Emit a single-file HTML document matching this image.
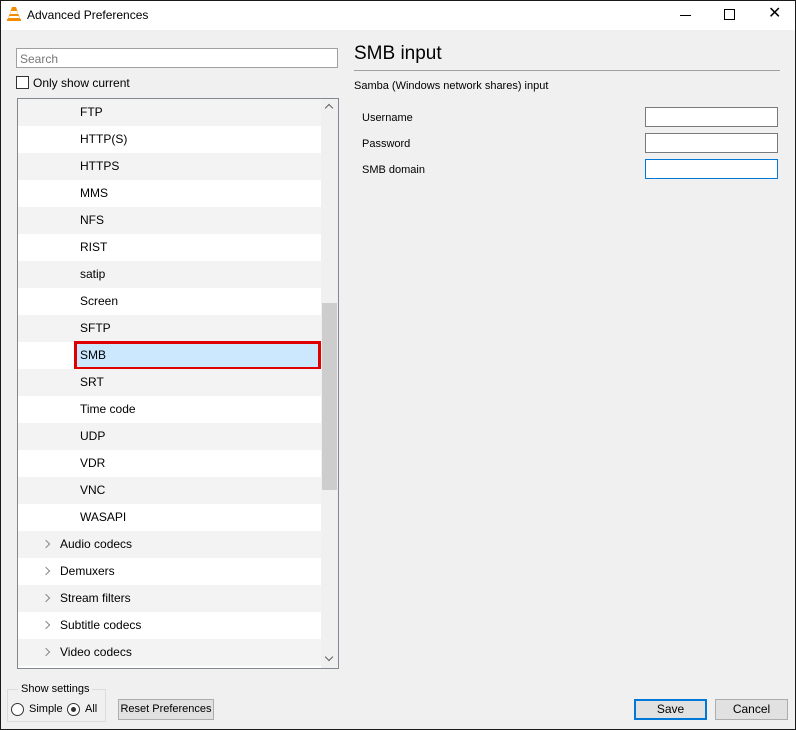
<!DOCTYPE html>
<html><head><style>
*{margin:0;padding:0;box-sizing:border-box}
html,body{width:796px;height:730px;overflow:hidden}
body{position:relative;background:#f0f0f0;font-family:"Liberation Sans",sans-serif;font-size:12px;color:#000}
.frame{position:absolute;left:0;top:0;width:796px;height:730px;border:1px solid #1a1a1a;z-index:5;pointer-events:none}
.title{position:absolute;left:0;top:0;width:796px;height:30px;background:#fff}
.abs{position:absolute;white-space:nowrap}
.row{position:absolute;left:0;width:304px;height:27px;line-height:27px}
.g{background:#f3f3f3}
.box{position:absolute;background:#fff;border:1px solid #7a7a7a}
.btn{position:absolute;background:#e1e1e1;border:1px solid #adadad;text-align:center;line-height:19px;font-size:12px;white-space:nowrap}
.chev{position:absolute;left:25px;top:10px;width:6px;height:6px;border-right:1.5px solid #888;border-top:1.5px solid #888;transform:rotate(45deg)}
</style></head><body>
<div class="title">
<svg class="abs" style="left:6px;top:6px" width="16" height="16" viewBox="0 0 16 16"><path d="M6 1h4l4 12H2z" fill="#f28c00"/><path d="M5 5h6l1 3H4z" fill="#fff"/><path d="M3.5 10h9l.7 2H2.8z" fill="#fff"/><rect x="1" y="13" width="14" height="2" fill="#f28c00"/></svg>
<div class="abs" style="left:27px;top:8px;font-size:12px">Advanced Preferences</div>
<div class="abs" style="left:680px;top:15px;width:11px;height:1px;background:#000"></div>
<div class="abs" style="left:724px;top:9px;width:11px;height:11px;border:1px solid #000"></div>
<div class="abs" style="left:768px;top:4px;font-size:16px;line-height:20px">✕</div>
</div>
<div class="box" style="left:16px;top:48px;width:322px;height:20px;border-color:#a0a0a0"><span class="abs" style="left:3px;top:3px;color:#777">Search</span></div>
<div class="box" style="left:16px;top:76px;width:13px;height:13px;border-color:#333"></div>
<div class="abs" style="left:33px;top:76px">Only show current</div>
<div class="box" style="left:17px;top:98px;width:322px;height:571px;border-color:#828790;overflow:hidden">
<div class="row g" style="top:0"><span class="abs" style="left:62px">FTP</span></div>
<div class="row" style="top:27px"><span class="abs" style="left:62px">HTTP(S)</span></div>
<div class="row g" style="top:54px"><span class="abs" style="left:62px">HTTPS</span></div>
<div class="row" style="top:81px"><span class="abs" style="left:62px">MMS</span></div>
<div class="row g" style="top:108px"><span class="abs" style="left:62px">NFS</span></div>
<div class="row" style="top:135px"><span class="abs" style="left:62px">RIST</span></div>
<div class="row g" style="top:162px"><span class="abs" style="left:62px">satip</span></div>
<div class="row" style="top:189px"><span class="abs" style="left:62px">Screen</span></div>
<div class="row g" style="top:216px"><span class="abs" style="left:62px">SFTP</span></div>
<div class="row" style="top:243px"><div class="abs" style="left:56px;top:-1px;width:247px;height:29px;background:#cce8ff;border:3px solid #e00000"></div><span class="abs" style="left:62px">SMB</span></div>
<div class="row g" style="top:270px"><span class="abs" style="left:62px">SRT</span></div>
<div class="row" style="top:297px"><span class="abs" style="left:62px">Time code</span></div>
<div class="row g" style="top:324px"><span class="abs" style="left:62px">UDP</span></div>
<div class="row" style="top:351px"><span class="abs" style="left:62px">VDR</span></div>
<div class="row g" style="top:378px"><span class="abs" style="left:62px">VNC</span></div>
<div class="row" style="top:405px"><span class="abs" style="left:62px">WASAPI</span></div>
<div class="row g" style="top:432px"><div class="chev"></div><span class="abs" style="left:42px">Audio codecs</span></div>
<div class="row" style="top:459px"><div class="chev"></div><span class="abs" style="left:42px">Demuxers</span></div>
<div class="row g" style="top:486px"><div class="chev"></div><span class="abs" style="left:42px">Stream filters</span></div>
<div class="row" style="top:513px"><div class="chev"></div><span class="abs" style="left:42px">Subtitle codecs</span></div>
<div class="row g" style="top:540px"><div class="chev"></div><span class="abs" style="left:42px">Video codecs</span></div>
<div class="abs" style="left:303px;top:0;width:17px;height:570px;background:#f0f0f0"></div>
<div class="abs" style="left:304px;top:204px;width:15px;height:187px;background:#cdcdcd"></div>
<div class="abs" style="left:308px;top:6px;width:6px;height:6px;border-left:1.5px solid #606060;border-top:1.5px solid #606060;transform:rotate(45deg)"></div>
<div class="abs" style="left:308px;top:555px;width:6px;height:6px;border-right:1.5px solid #606060;border-bottom:1.5px solid #606060;transform:rotate(45deg)"></div>
</div>
<div class="abs" style="left:7px;top:689px;width:99px;height:33px;border:1px solid #dcdcdc"></div>
<div class="abs" style="left:18px;top:683px;background:#f0f0f0;padding:0 3px;font-size:11px">Show settings</div>
<div class="abs" style="left:11px;top:703px;width:13px;height:13px;border:1px solid #333;border-radius:50%;background:#fff"></div>
<div class="abs" style="left:29px;top:703px;font-size:11px">Simple</div>
<div class="abs" style="left:67px;top:703px;width:13px;height:13px;border:1px solid #333;border-radius:50%;background:#fff"><div class="abs" style="left:3px;top:3px;width:5px;height:5px;border-radius:50%;background:#333"></div></div>
<div class="abs" style="left:85px;top:703px;font-size:11px">All</div>
<div class="btn" style="left:118px;top:699px;width:96px;height:21px;font-size:11px">Reset Preferences</div>
<div class="abs" style="left:354px;top:43px;font-size:19px">SMB input</div>
<div class="abs" style="left:354px;top:70px;width:426px;height:1px;background:#a0a0a0"></div>
<div class="abs" style="left:354px;top:80px;font-size:11px">Samba (Windows network shares) input</div>
<div class="abs" style="left:362px;top:112px;font-size:11px">Username</div>
<div class="abs" style="left:362px;top:138px;font-size:11px">Password</div>
<div class="abs" style="left:362px;top:164px;font-size:11px">SMB domain</div>
<div class="box" style="left:645px;top:107px;width:133px;height:20px"></div>
<div class="box" style="left:645px;top:133px;width:133px;height:20px"></div>
<div class="box" style="left:645px;top:159px;width:133px;height:20px;border-color:#0078d7"></div>
<div class="btn" style="left:634px;top:699px;width:73px;height:21px;border:2px solid #0078d7;line-height:17px">Save</div>
<div class="btn" style="left:715px;top:699px;width:73px;height:21px">Cancel</div>
<div class="frame"></div>
</body></html>
